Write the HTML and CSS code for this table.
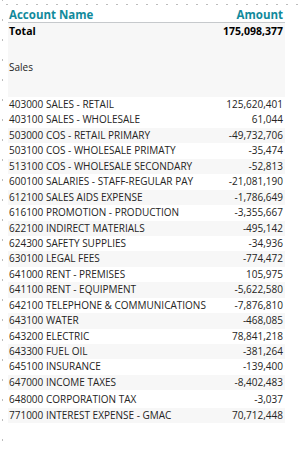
FILE: index.html
```html
<!DOCTYPE html>
<html>
<head>
<meta charset="utf-8">
<link rel="stylesheet" href="styles.css">
</head>
<body>
<div class="table">
  <div class="head">
    <span>Account Name</span>
    <span>Amount</span>
  </div>
  <div class="summary">
    <div class="total"><span>Total</span><span>175,098,377</span></div>
    <div class="group">Sales</div>
  </div>
  <div class="rows">
    <div class="row"><span>403000 SALES - RETAIL</span><span>125,620,401</span></div>
    <div class="row"><span>403100 SALES - WHOLESALE</span><span>61,044</span></div>
    <div class="row alt"><span>503000 COS - RETAIL PRIMARY</span><span>-49,732,706</span></div>
    <div class="row"><span>503100 COS - WHOLESALE PRIMATY</span><span>-35,474</span></div>
    <div class="row alt"><span>513100 COS - WHOLESALE SECONDARY</span><span>-52,813</span></div>
    <div class="row"><span>600100 SALARIES - STAFF-REGULAR PAY</span><span>-21,081,190</span></div>
    <div class="row alt"><span>612100 SALES AIDS EXPENSE</span><span>-1,786,649</span></div>
    <div class="row"><span>616100 PROMOTION - PRODUCTION</span><span>-3,355,667</span></div>
    <div class="row alt"><span>622100 INDIRECT MATERIALS</span><span>-495,142</span></div>
    <div class="row"><span>624300 SAFETY SUPPLIES</span><span>-34,936</span></div>
    <div class="row alt"><span>630100 LEGAL FEES</span><span>-774,472</span></div>
    <div class="row"><span>641000 RENT - PREMISES</span><span>105,975</span></div>
    <div class="row alt"><span>641100 RENT - EQUIPMENT</span><span>-5,622,580</span></div>
    <div class="row"><span>642100 TELEPHONE &amp; COMMUNICATIONS</span><span>-7,876,810</span></div>
    <div class="row alt"><span>643100 WATER</span><span>-468,085</span></div>
    <div class="row"><span>643200 ELECTRIC</span><span>78,841,218</span></div>
    <div class="row alt"><span>643300 FUEL OIL</span><span>-381,264</span></div>
    <div class="row"><span>645100 INSURANCE</span><span>-139,400</span></div>
    <div class="row alt"><span>647000 INCOME TAXES</span><span>-8,402,483</span></div>
    <div class="row tall"><span>648000 CORPORATION TAX</span><span>-3,037</span></div>
    <div class="row alt"><span>771000 INTEREST EXPENSE - GMAC</span><span>70,712,448</span></div>
  </div>
</div>
</body>
</html>
```

FILE: styles.css
```css
html, body {
  margin: 0;
  padding: 0;
}
body {
  width: 303px;
  height: 458px;
  background-color: #ffffff;
  background-image:
    radial-gradient(circle, #bdbdbd 0.9px, transparent 1.1px),
    radial-gradient(circle, #bdbdbd 0.9px, transparent 1.1px);
  background-size: 10px 3px, 3px 20px;
  background-position: 2px 3px, 1px 30px;
  background-repeat: repeat-x, repeat-y;
  font-family: "Open Sans", "DejaVu Sans", sans-serif;
  color: #252423;
}
.table {
  margin-left: 8px;
  width: 277px;
}
.head {
  display: flex;
  justify-content: space-between;
  padding: 7px 2px 0 1px;
  height: 15px;
  line-height: 15px;
  font-size: 11.5px;
  font-weight: 700;
  color: #118a9c;
  border-bottom: 1px solid #c6c9cc;
}
.summary {
  background: #f7f7f7;
  height: 74px;
}
.total {
  display: flex;
  justify-content: space-between;
  padding: 0 2px 0 1px;
  height: 16px;
  line-height: 16px;
  font-size: 10.5px;
  font-weight: 700;
  color: #000;
}
.group {
  margin-top: 21.4px;
  padding-left: 1px;
  font-size: 10px;
  line-height: 15.44px;
}
.row {
  display: flex;
  justify-content: space-between;
  padding: 0 2px 0 1px;
  height: 15.44px;
  line-height: 15.44px;
  font-size: 10px;
  white-space: nowrap;
}
.row.alt {
  background: #f7f7f7;
}
.row.tall {
  height: 17.5px;
  line-height: 18.5px;
}
```
